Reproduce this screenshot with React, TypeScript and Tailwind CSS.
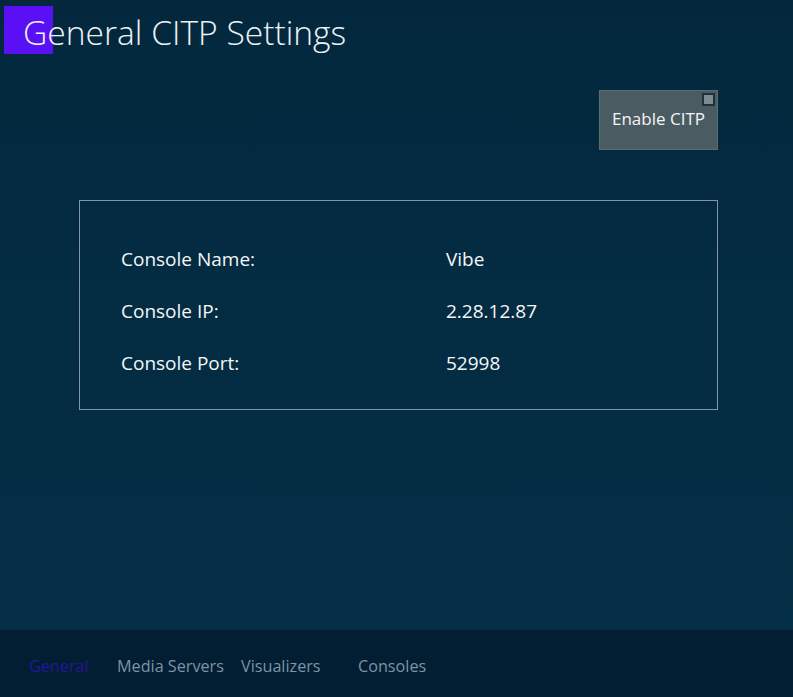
import React from "react";

export default function App() {
  const rows = [
    ["Console Name:", "Vibe"],
    ["Console IP:", "2.28.12.87"],
    ["Console Port:", "52998"],
  ];
  return (
    <div
      className="w-[793px] h-[697px] flex flex-col bg-gradient-to-b from-[#03283e] to-[#043047] text-white overflow-hidden"
      style={{ fontFamily: '"Open Sans", "Noto Sans", sans-serif' }}
    >
      <div className="flex-1 flex flex-col">
        <div className="relative h-[66px]">
          <div className="absolute left-[4px] top-[6px] w-[49px] h-[48px] bg-[#5a10f5]" />
          <h1 className="absolute left-[23px] top-[8px] text-[33.6px] font-light leading-[48px] text-[#eef3f6]">
            General CITP Settings
          </h1>
        </div>
        <div className="flex justify-end pr-[75px] mt-[24px]">
          <button className="relative w-[119px] h-[60px] bg-[#4a5c62] border border-[#5d6e73] text-[17px] text-[#f3f5f6] flex items-center justify-center pb-[2px]">
            Enable CITP
            <span className="absolute top-[2px] right-[2px] w-[13px] h-[13px] border-2 border-[#1e3340] bg-[#7e8a8e]" />
          </button>
        </div>
        <div className="ml-[79px] mr-[75px] mt-[50px] h-[210px] border border-[#8196a2] flex flex-col gap-[26px] pt-[45px] pl-[41px]">
          {rows.map(([k, v]) => (
            <div key={k} className="flex items-center h-[26px] text-[19px] text-[#f4f7f9]">
              <span className="w-[325px]">{k}</span>
              <span>{v}</span>
            </div>
          ))}
        </div>
      </div>
      <div className="h-[67px] bg-[#021e33] flex items-center text-[16.2px] text-[#7d93a3] pl-[29px] pt-[5px]">
        <span className="text-[#24169a] w-[88px]">General</span>
        <span className="w-[124px]">Media Servers</span>
        <span className="w-[117px]">Visualizers</span>
        <span>Consoles</span>
      </div>
    </div>
  );
}
